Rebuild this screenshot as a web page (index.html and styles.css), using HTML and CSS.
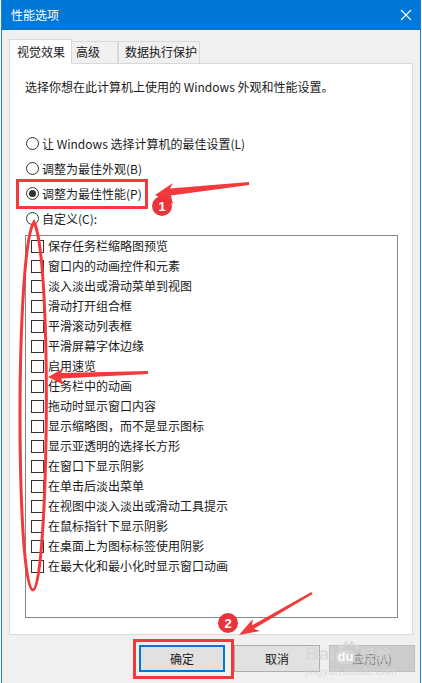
FILE: index.html
```html
<!DOCTYPE html>
<html lang="zh-CN">
<head>
<meta charset="utf-8">
<title>性能选项</title>
<link rel="stylesheet" href="styles.css">
</head>
<body>
<div class="window">
  <div class="titlebar">
    <span class="title">性能选项</span>
    <svg class="close" width="12" height="12" viewBox="0 0 12 12"><path d="M1 1 L11 11 M11 1 L1 11" stroke="#fff" stroke-width="1.1" fill="none"/></svg>
  </div>
  <div class="content">
    <div class="tabs">
      <div class="tab active">视觉效果</div>
      <div class="tab t2">高级</div>
      <div class="tab t3">数据执行保护</div>
    </div>
    <div class="panel">
      <p class="desc">选择你想在此计算机上使用的 Windows 外观和性能设置。</p>
      <div class="radios">
        <div class="radio-row"><span class="radio"></span><span>让 Windows 选择计算机的最佳设置(L)</span></div>
        <div class="radio-row"><span class="radio"></span><span>调整为最佳外观(B)</span></div>
        <div class="radio-row"><span class="radio checked"></span><span>调整为最佳性能(P)</span></div>
        <div class="radio-row"><span class="radio"></span><span>自定义(C):</span></div>
      </div>
      <div class="list">
        <div class="check-row"><span class="box"></span><span>保存任务栏缩略图预览</span></div>
        <div class="check-row"><span class="box"></span><span>窗口内的动画控件和元素</span></div>
        <div class="check-row"><span class="box"></span><span>淡入淡出或滑动菜单到视图</span></div>
        <div class="check-row"><span class="box"></span><span>滑动打开组合框</span></div>
        <div class="check-row"><span class="box"></span><span>平滑滚动列表框</span></div>
        <div class="check-row"><span class="box"></span><span>平滑屏幕字体边缘</span></div>
        <div class="check-row"><span class="box"></span><span>启用速览</span></div>
        <div class="check-row"><span class="box"></span><span>任务栏中的动画</span></div>
        <div class="check-row"><span class="box"></span><span>拖动时显示窗口内容</span></div>
        <div class="check-row"><span class="box"></span><span>显示缩略图，而不是显示图标</span></div>
        <div class="check-row"><span class="box"></span><span>显示亚透明的选择长方形</span></div>
        <div class="check-row"><span class="box"></span><span>在窗口下显示阴影</span></div>
        <div class="check-row"><span class="box"></span><span>在单击后淡出菜单</span></div>
        <div class="check-row"><span class="box"></span><span>在视图中淡入淡出或滑动工具提示</span></div>
        <div class="check-row"><span class="box"></span><span>在鼠标指针下显示阴影</span></div>
        <div class="check-row"><span class="box"></span><span>在桌面上为图标标签使用阴影</span></div>
        <div class="check-row"><span class="box"></span><span>在最大化和最小化时显示窗口动画</span></div>
      </div>
    </div>
    <div class="buttons">
      <button class="btn default">确定</button>
      <button class="btn">取消</button>
      <button class="btn disabled">应用(A)</button>
    </div>
  </div>

  <svg class="annot" width="422" height="683" viewBox="0 0 422 683">
    <rect x="16.5" y="180.5" width="129" height="27" fill="none" stroke="#f23a3c" stroke-width="3"/>
    <polygon points="154,195 172,183 169,188.5 248,182 248,185 170,195.5 172,204" fill="#f23a3c"/>
    <circle cx="161" cy="206" r="10" fill="#e8343a"/>
    <text x="161" y="210.5" text-anchor="middle" class="num">1</text>
    <path d="M33 222 C 14 250, 15 590, 32 590 C 47 590, 52 260, 33 222 Z" fill="none" stroke="#f23a3c" stroke-width="3"/>
    <polygon points="47,377 63,368 60,373 147,371 147,374 60,378.5 63,385" fill="#f23a3c"/>
    <polygon points="238,635 251.8,618.9 251,625.3 310.4,592 311.6,594 252.9,628.7 258.8,631.1" fill="#f23a3c"/>
    <circle cx="227" cy="623" r="10" fill="#e8343a"/>
    <text x="227" y="627.5" text-anchor="middle" class="num">2</text>
    <rect x="133.5" y="640.5" width="98" height="37" fill="none" stroke="#f23a3c" stroke-width="3"/>
    <g class="paw" fill="rgba(215,215,215,0.8)">
      <ellipse cx="340" cy="647" rx="2.2" ry="2.8"/>
      <ellipse cx="345" cy="644" rx="2.2" ry="2.8"/>
      <ellipse cx="351" cy="644" rx="2.2" ry="2.8"/>
      <ellipse cx="356" cy="647" rx="2.2" ry="2.8"/>
    </g>
  </svg>

  <div class="watermark">
    <div class="wm-top"><span class="wm-bai">Bai</span><span class="wm-du">du</span><span class="wm-jy">经验</span></div>
    <div class="wm-url">jingyan.baidu.com</div>
  </div>
</div>
</body>
</html>
```

FILE: styles.css
```css
* { box-sizing: border-box; }
html, body { margin: 0; padding: 0; background: #ffffff; }
body { font-family: "Noto Sans CJK SC", "Noto Sans", sans-serif; font-size: 12px; color: #1a1a1a; }

.window {
  position: relative;
  width: 420px;
  height: 683px;
  margin-left: 1px;
  background: #f0f0f0;
  border-left: 1px solid #1a7fd6;
  border-right: 1px solid #1a7fd6;
  overflow: hidden;
}

.titlebar {
  height: 30px;
  background: #0078d7;
  display: flex;
  align-items: center;
  justify-content: space-between;
  padding: 0 8px 0 9px;
}
.title { color: #fff; font-size: 12px; line-height: 16px; }
.close { display: block; }

.content { padding-top: 9px; }

.tabs {
  display: flex;
  align-items: flex-end;
  height: 24px;
  margin-left: 7px;
}
.tab {
  height: 22px;
  border: 1px solid #d9d9d9;
  border-bottom: none;
  background: #f0f0f0;
  line-height: 20px;
  font-size: 12px;
  color: #1a1a1a;
}
.tab.active {
  position: relative;
  z-index: 1;
  height: 25px;
  margin-bottom: -1px;
  width: 63px;
  background: #fff;
  padding-left: 7px;
  line-height: 24px;
}
.tab.t2 { width: 46px; padding-left: 4px; border-left: none; }
.tab.t3 { width: 82px; padding-left: 6px; }

.panel {
  margin-left: 7px;
  width: 404px;
  height: 572px;
  background: #fff;
  border: 1px solid #d9d9d9;
  padding: 13px 0 0 15px;
}
.desc { margin: 0; line-height: 20px; }

.radios { margin-top: 34px; }
.radio-row {
  height: 25px;
  display: flex;
  align-items: center;
  padding-left: 1px;
  line-height: 16px;
}
.radio {
  width: 13px;
  height: 13px;
  border: 1px solid #333;
  border-radius: 50%;
  margin-right: 3px;
  display: flex;
  align-items: center;
  justify-content: center;
  flex: none;
}
.radio.checked::after {
  content: "";
  width: 7px;
  height: 7px;
  border-radius: 50%;
  background: #333;
}

.list {
  margin-top: 4px;
  width: 373px;
  height: 383px;
  border: 1px solid #828790;
  padding-left: 5px;
}
.check-row {
  height: 20px;
  display: flex;
  align-items: center;
  line-height: 16px;
}
.box {
  width: 13px;
  height: 13px;
  border: 1px solid #333;
  background: #fff;
  margin-right: 4px;
  flex: none;
}

.buttons {
  display: flex;
  justify-content: flex-end;
  gap: 9px;
  margin-top: 10px;
  padding-right: 5px;
}
.btn {
  width: 86px;
  height: 27px;
  font-family: "Noto Sans CJK SC", "Noto Sans", sans-serif;
  font-size: 12px;
  color: #1a1a1a;
  background: #e1e1e1;
  border: 1px solid #adadad;
  padding: 0;
}
.btn.default { border: 2px solid #0078d7; }
.btn.disabled { background: #cccccc; border-color: #bfbfbf; color: #838383; }

.annot { position: absolute; left: -1px; top: 0; pointer-events: none; }
.num { fill: #fff; font-family: "Liberation Sans", sans-serif; font-size: 13px; font-weight: bold; }

.watermark {
  position: absolute;
  left: 303px;
  top: 643px;
  white-space: nowrap;
  color: rgba(215, 215, 215, 0.8);
  pointer-events: none;
}
.wm-top { display: flex; align-items: center; height: 22px; }
.wm-bai { font-family: "Liberation Sans", sans-serif; font-weight: bold; font-size: 19px; line-height: 22px; }
.wm-du {
  font-family: "Liberation Sans", sans-serif;
  font-weight: bold;
  font-size: 13px;
  line-height: 14px;
  background: rgba(215, 215, 215, 0.8);
  color: rgba(255, 255, 255, 0.95);
  border-radius: 5px;
  padding: 0 2px;
  margin: 5px 5px 0 1px;
}
.wm-jy { font-size: 15px; font-weight: bold; line-height: 22px; }
.wm-url { font-family: "Liberation Sans", sans-serif; font-size: 11px; line-height: 13px; margin-top: 0; letter-spacing: 0.2px; }
```
